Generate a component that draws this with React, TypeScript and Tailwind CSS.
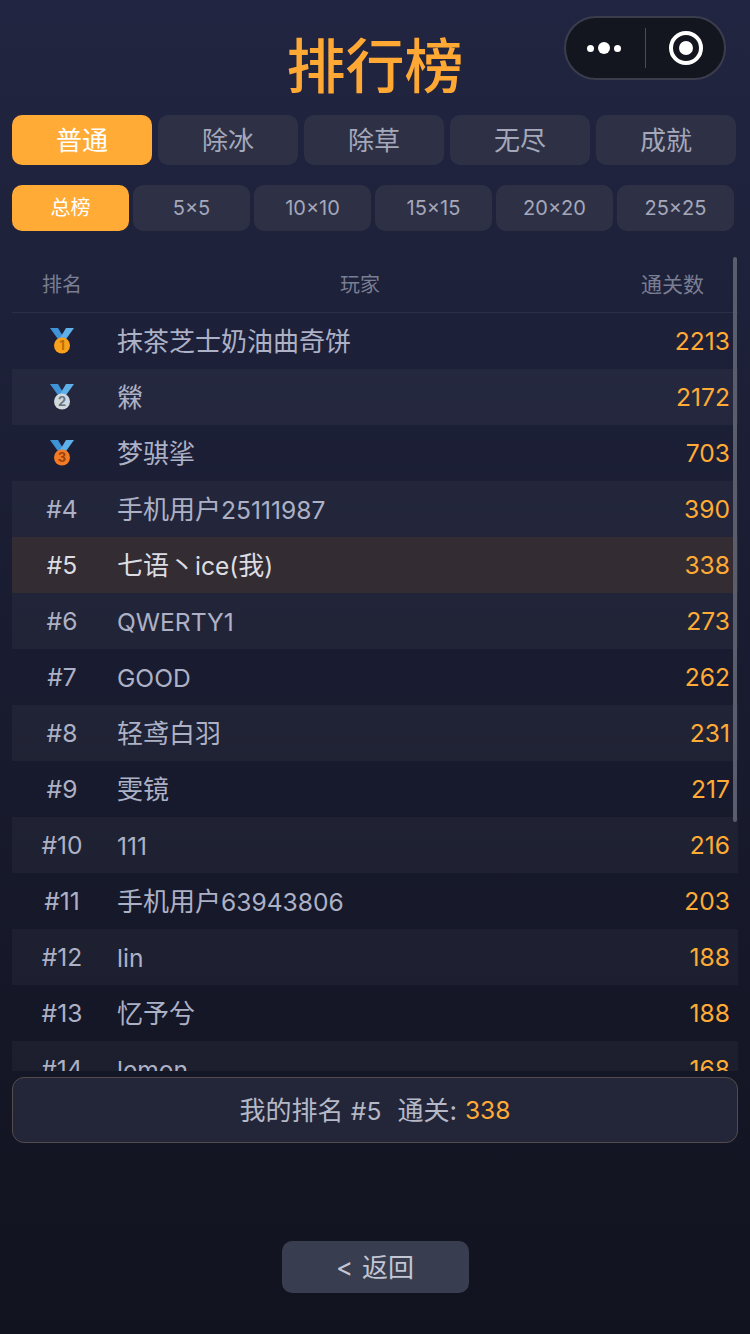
import { FC } from 'react';

const font = 'Inter, "Noto Sans CJK SC", sans-serif';

const modes = ['普通', '除冰', '除草', '无尽', '成就'];
const sizes = ['总榜', '5×5', '10×10', '15×15', '20×20', '25×25'];

const players = [
  { rank: 1, name: '抹茶芝士奶油曲奇饼', score: 2213 },
  { rank: 2, name: '檾', score: 2172 },
  { rank: 3, name: '梦骐挲', score: 703 },
  { rank: 4, name: '手机用户25111987', score: 390 },
  { rank: 5, name: '七语丶ice(我)', score: 338 },
  { rank: 6, name: 'QWERTY1', score: 273 },
  { rank: 7, name: 'GOOD', score: 262 },
  { rank: 8, name: '轻鸢白羽', score: 231 },
  { rank: 9, name: '雯镜', score: 217 },
  { rank: 10, name: '111', score: 216 },
  { rank: 11, name: '手机用户63943806', score: 203 },
  { rank: 12, name: 'lin', score: 188 },
  { rank: 13, name: '忆予兮', score: 188 },
  { rank: 14, name: 'lemon', score: 168 },
];

const medalColors: Record<number, { disc: string; num: string }> = {
  1: { disc: '#f9a11b', num: '#bd6a08' },
  2: { disc: '#ced8de', num: '#66757f' },
  3: { disc: '#f47b25', num: '#9c420c' },
};

// latin runs sit a little smaller than the cjk text around them
const Mixed: FC<{ text: string }> = ({ text }) => (
  <>
    {text.split(/([\x00-\x7f]+)/).map((part, i) =>
      i % 2 === 1 ? (
        <span key={i} className="text-[24.6px]">
          {part}
        </span>
      ) : (
        part
      )
    )}
  </>
);

const Medal: FC<{ rank: number }> = ({ rank }) => {
  const c = medalColors[rank];
  return (
    <svg width="26" height="28" viewBox="0 0 26 28">
      <path d="M1 1h8l6 10-4 4z" fill="#3f93d8" />
      <path d="M25 1h-8l-6 10 4 4z" fill="#5fb0e8" />
      <circle cx="13" cy="18.5" r="8" fill={c.disc} />
      <text
        x="13"
        y="23"
        textAnchor="middle"
        fontSize="13"
        fontWeight="700"
        fill={c.num}
      >
        {rank}
      </text>
    </svg>
  );
};

export default function App() {
  return (
    <div
      className="relative h-[1334px] w-[750px] overflow-hidden bg-gradient-to-b from-[#212541] to-[#11131f]"
      style={{ fontFamily: font }}
    >
      {/* capsule */}
      <div className="absolute left-[564px] top-[16px] flex h-[64px] w-[162px] items-center rounded-full border-2 border-[#3a3d4c] bg-[#14161f]">
        <div className="flex w-[79px] items-center justify-center gap-[4px] pr-[3px]">
          <span className="h-[7px] w-[7px] rounded-full bg-white" />
          <span className="h-[12px] w-[12px] rounded-full bg-white" />
          <span className="h-[7px] w-[7px] rounded-full bg-white" />
        </div>
        <div className="h-[40px] w-px bg-[#4a4c58]" />
        <div className="flex flex-1 items-center justify-center pl-[2px]">
          <div className="flex h-[34px] w-[34px] items-center justify-center rounded-full border-[4px] border-white">
            <span className="h-[14px] w-[14px] rounded-full bg-white" />
          </div>
        </div>
      </div>

      <h1 className="h-[115px] pt-[25px] text-center text-[59px] leading-[84px] font-medium text-[#ffa833]">
        排行榜
      </h1>

      <div className="flex gap-[6px] px-[12px]">
        {modes.map((m, i) => (
          <div
            key={m}
            className={
              i === 0
                ? 'flex h-[50px] w-[140px] items-center justify-center rounded-[10px] bg-[#ffab35] text-[26px] text-white'
                : 'flex h-[50px] w-[140px] items-center justify-center rounded-[10px] bg-[#2e3145] text-[26px] text-[#a4a8ba]'
            }
          >
            {m}
          </div>
        ))}
      </div>

      <div className="mt-[20px] flex gap-[4px] pl-[12px]">
        {sizes.map((s, i) => (
          <div
            key={s}
            className={
              i === 0
                ? 'flex h-[46px] w-[117px] items-center justify-center rounded-[10px] bg-[#ffab35] pb-[1px] text-[20px] text-white'
                : 'flex h-[46px] w-[117px] items-center justify-center rounded-[10px] bg-[#2e3145] text-[20px] text-[#a4a8ba]'
            }
          >
            {s}
          </div>
        ))}
      </div>

      <div className="relative mx-[12px] mt-[26px] h-[814px] overflow-hidden">
        <div className="flex h-[56px] items-center border-b border-[#2d3044] text-[20px] text-[#7a7e92]">
          <span className="w-[100px] text-center">排名</span>
          <span className="flex-1 pr-[30px] text-center">玩家</span>
          <span className="w-[100px] pr-[34px] text-right text-[21px]">通关数</span>
        </div>
        {players.map((p) => (
          <div
            key={p.rank}
            className={
              p.rank === 5
                ? 'flex h-[56px] items-center bg-[#ffab35]/[0.11] text-[26px] text-[#dcdde3]'
                : p.rank % 2 === 0
                  ? 'flex h-[56px] items-center bg-white/[0.035] text-[26px] text-[#adb1c6]'
                  : 'flex h-[56px] items-center text-[26px] text-[#adb1c6]'
            }
          >
            <span className="flex w-[100px] items-center justify-center text-[24.6px]">
              {p.rank <= 3 ? <Medal rank={p.rank} /> : `#${p.rank}`}
            </span>
            <span className="flex-1 pl-[5px]">
              <Mixed text={p.name} />
            </span>
            <span className="pr-[8px] text-[24.6px] text-[#ffab35]">{p.score}</span>
          </div>
        ))}
        <div className="absolute right-[1px] top-0 h-[565px] w-[4px] rounded-full bg-[#5a5d6c]" />
      </div>

      <div className="mx-[12px] mt-[6px] flex h-[66px] items-center justify-center rounded-[12px] border border-[#544c4a] bg-[#232639] text-[26px] text-[#b5b8c6]">
        <span>
          我的排名 <span className="text-[24.6px]">#5</span>
        </span>
        <span className="ml-[16px]">通关:</span>
        <span className="ml-[8px] text-[24.6px] text-[#ffab35]">338</span>
      </div>

      <div className="mx-auto mt-[98px] flex h-[52px] w-[187px] items-center justify-center gap-[9px] rounded-[10px] bg-[#383d50] text-[26px] text-[#c3c6d3]">
        <span>&lt;</span>
        <span>返回</span>
      </div>
    </div>
  );
}
